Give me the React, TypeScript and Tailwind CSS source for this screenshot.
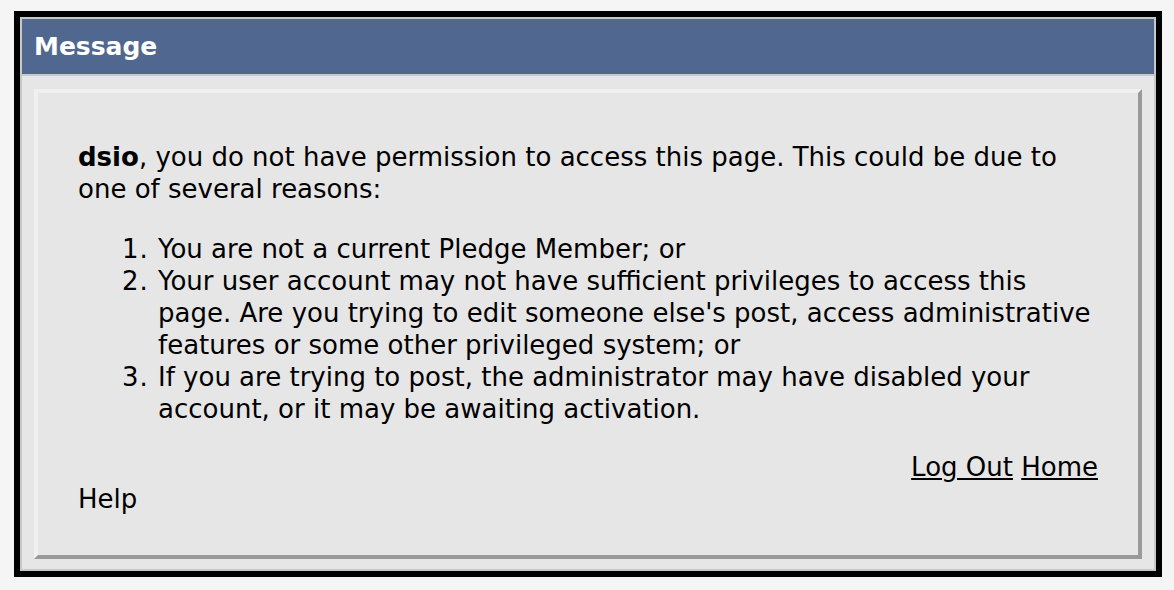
export default function App() {
  return (
    <div className="min-h-screen bg-[#f5f5f5] pt-[11px] pl-[14px] font-['DejaVu_Sans',Verdana,sans-serif]">
      <div className="w-[1148px] h-[566px] border-[6px] border-black">
        <div className="flex h-full flex-col border-2 border-[#c8c8c8]">
          {/* Header */}
          <div className="flex h-[57px] items-center border-b-2 border-[#c8c8c8] bg-[#506790] pl-[12px] pt-[1px]">
            <span className="text-[25px] font-bold text-white">Message</span>
          </div>

          {/* Panel */}
          <div className="flex-1 bg-[#e6e6e6] px-[12px] pt-[13px] pb-[10px]">
            <div className="h-full border-[4px] border-t-[#f0f0f0] border-l-[#f0f0f0] border-r-[#999999] border-b-[#999999] px-[40px] pt-[48px] text-[26px] leading-[32px] text-black">
              <p>
                <b>dsio</b>, you do not have permission to access this page. This could be due to one of several reasons:
              </p>
              <ol className="mt-[28px] list-decimal pl-[80px] marker:tracking-[1px]">
                <li>You are not a current Pledge Member; or</li>
                <li>
                  Your user account may not have sufficient privileges to access this page. Are you trying to edit someone else's post, access administrative features or some other privileged system; or
                </li>
                <li>
                  If you are trying to post, the administrator may have disabled your account, or it may be awaiting activation.
                </li>
              </ol>
              <div className="mt-[26px] text-right">
                <a href="#" className="underline">Log Out</a> <a href="#" className="underline">Home</a>
              </div>
              <div>Help</div>
            </div>
          </div>
        </div>
      </div>
    </div>
  )
}
